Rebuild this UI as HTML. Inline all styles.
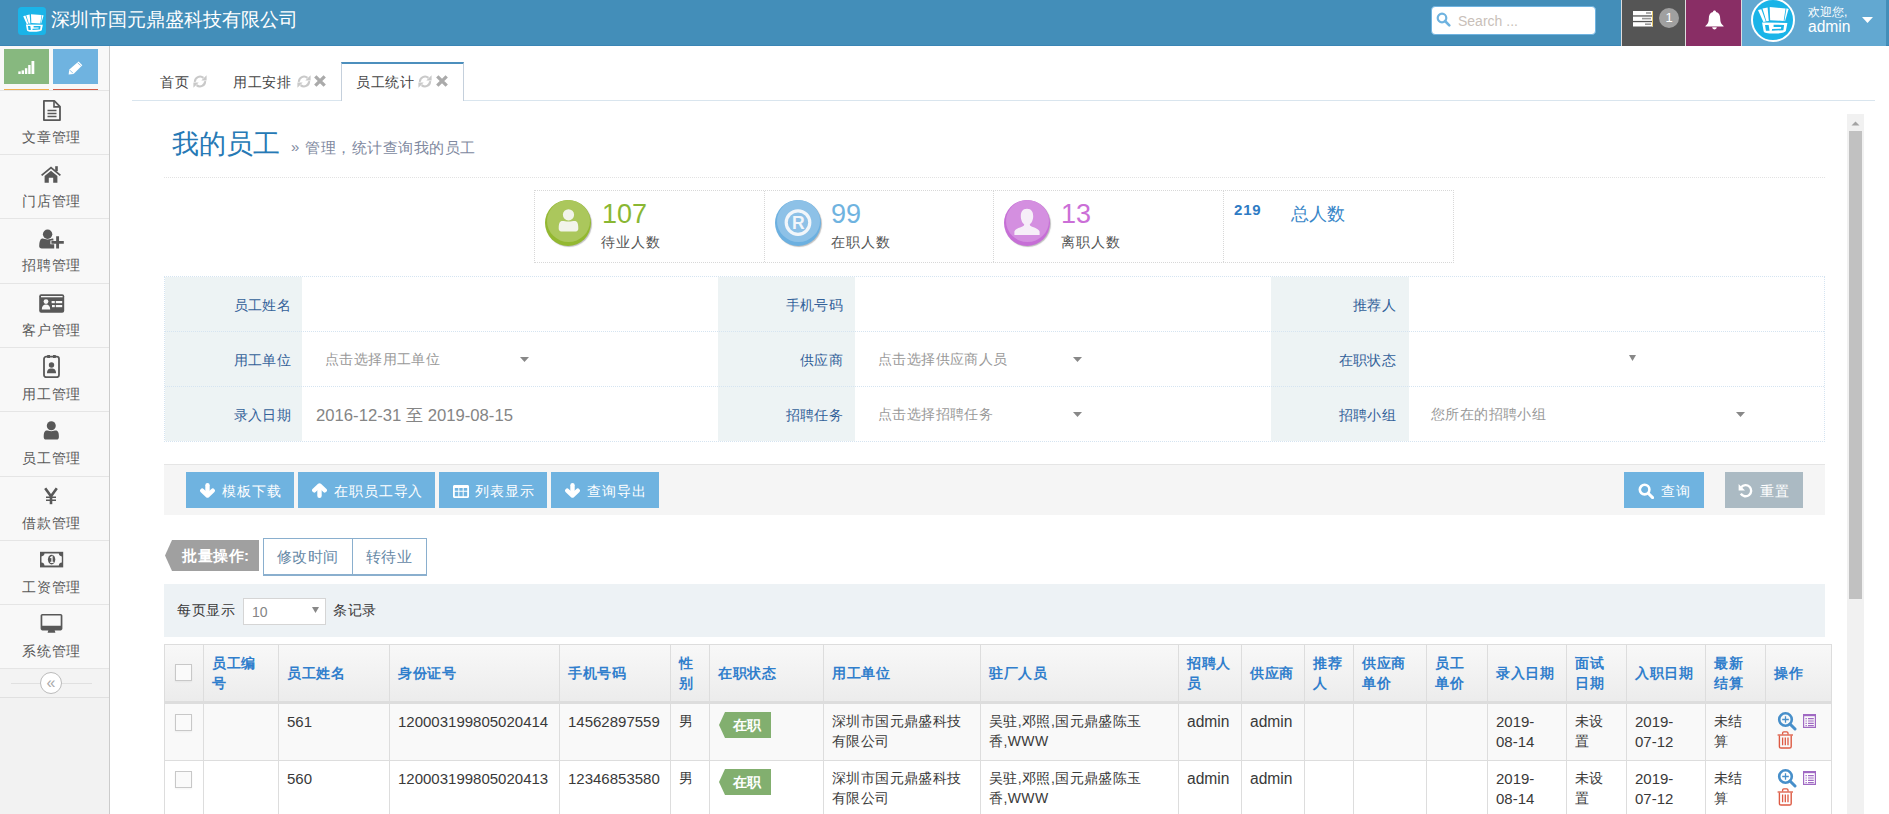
<!DOCTYPE html>
<html><head><meta charset="utf-8">
<style>
*{box-sizing:border-box;}
html,body{margin:0;padding:0;}
body{width:1889px;height:814px;overflow:hidden;position:relative;background:#fff;font-family:"Liberation Sans",sans-serif;font-size:14px;color:#393939;}
.abs{position:absolute;}
/* navbar */
#nav{left:0;top:0;width:1889px;height:46px;background:#438eb9;border-bottom:1px solid #3a85b5;}
#brand{left:51px;top:7px;color:#fff;font-size:18.6px;line-height:26px;white-space:nowrap;}
#search{left:1431px;top:6px;width:165px;height:29px;background:#fff;border:1px solid #6fb3e0;border-radius:4px;}
#search .ph{position:absolute;left:26px;top:6px;font-size:14px;line-height:16px;color:#c9bfb9;}
#tasks{left:1621px;top:0;width:64px;height:46px;background:#555;border-left:1px solid #ddd;}
#bell{left:1685px;top:0;width:56px;height:46px;background:#892e65;border-left:1px solid #ddd;}
#user{left:1741px;top:0;width:145px;height:46px;background:#62a8d1;border-left:1px solid #ddd;}
/* sidebar */
#side{left:0;top:46px;width:110px;height:768px;background:#f2f2f2;border-right:1px solid #ccc;}
.sc{position:absolute;top:3px;width:45px;height:35px;}
.item{position:absolute;left:0;width:109px;background:#f8f8f8;border-bottom:1px solid #e5e5e5;color:#585858;}
.item .t{position:absolute;left:22px;top:38px;font-size:14px;letter-spacing:0.8px;line-height:16px;white-space:nowrap;}
.item svg{position:absolute;}
.tab{font-size:14px;letter-spacing:0.7px;line-height:16px;color:#444;white-space:nowrap;}
.flab{font-size:14px;letter-spacing:0.3px;line-height:16px;color:#336199;text-align:right;white-space:nowrap;}
.fval{font-size:14px;letter-spacing:0.4px;line-height:16px;color:#999;white-space:nowrap;}
.circ{width:46px;height:46px;border-radius:50%;box-shadow:1px 1px 1px rgba(0,0,0,.25);overflow:hidden;}
.btxt{font-size:14px;letter-spacing:0.9px;line-height:16px;color:#fff;white-space:nowrap;}
.th{font-size:14px;letter-spacing:0.5px;line-height:20px;color:#307ecc;font-weight:bold;white-space:nowrap;}
.td{font-size:14px;letter-spacing:0.4px;line-height:20px;color:#393939;white-space:nowrap;}
.tdl{font-size:15px;line-height:20px;padding-top:1px;color:#393939;white-space:nowrap;}
.cb{width:17px;height:17px;border:1px solid #c8c8c8;background:#fafafa;box-shadow:0 1px 2px rgba(0,0,0,.05);}
</style></head>
<body>
<div id="nav" class="abs">
  <svg class="abs" style="left:18px;top:7px" width="28" height="28" viewBox="0 0 28 28">
    <rect x="0" y="0" width="28" height="28" rx="3.5" fill="#1ab4e8"/>
    <g id="lg" fill="#fff">
      <path d="M5.2 9.2 L7.4 8.6 L10.4 16.8 L8.8 17.2 Z"/>
      <path d="M8.2 8.2 L11.6 7.4 L12.4 16.4 L10.8 16.6 Z"/>
      <path d="M13 7.2 L23.6 8.1 L22.3 16.4 L13.3 15.9 Z"/>
      <path d="M24.2 8 L25.6 8.4 L23.2 16.6 L22.8 16.5 Z"/>
      <path d="M7.9 17.4 L24.8 17.8 L23.8 23 C23.2 24.2 20.8 24.8 14.5 24.8 C10.2 24.8 9.1 24.2 8.9 23 Z"/>
    </g>
    <g fill="#1ab4e8">
      <path d="M9.9 19.1 L12.3 19.1 L12.9 22.9 L10.5 22.9 Z"/>
      <path d="M15.6 18.9 L22.6 19.1 L22.1 22.6 L14.4 23 L14.6 21.8 L20.5 21.6 L20.7 20.4 L15.6 20.4 Z"/>
    </g>
  </svg>
  <div id="brand" class="abs">深圳市国元鼎盛科技有限公司</div>
  <div id="search" class="abs">
    <svg class="abs" style="left:4px;top:5px" width="15" height="15" viewBox="0 0 15 15"><circle cx="6" cy="6" r="4.3" fill="none" stroke="#6fb3e0" stroke-width="2.2"/><path d="M9 9 L13.3 13.3" stroke="#6fb3e0" stroke-width="2.6" stroke-linecap="round"/></svg>
    <div class="ph">Search ...</div>
  </div>
  <div id="tasks" class="abs">
    <svg class="abs" style="left:11px;top:11px" width="20" height="16" viewBox="0 0 20 16">
      <rect x="0" y="0" width="20" height="4.3" fill="#fff"/><rect x="0" y="5.6" width="20" height="4.3" fill="#fff"/><rect x="0" y="11.2" width="20" height="4.3" fill="#fff"/>
      <rect x="13" y="1.2" width="5" height="1.6" fill="#999"/><rect x="9" y="6.8" width="9" height="1.6" fill="#999"/><rect x="12" y="12.4" width="6" height="1.6" fill="#999"/>
      <rect x="19" y="0" width="1" height="15.5" fill="#e8c86a"/>
    </svg>
    <div class="abs" style="left:37px;top:8px;width:20px;height:20px;border-radius:10px;background:#a0a0a0;color:#fff;font-size:13px;line-height:20px;text-align:center;">1</div>
  </div>
  <div id="bell" class="abs">
    <svg class="abs" style="left:19px;top:10px" width="19" height="20" viewBox="0 0 19 20">
      <path d="M9.5 0.6 C10.4 0.6 11 1.2 11 2 C14 2.7 15.2 5 15.2 8.6 C15.2 12.6 16.2 14.2 18.6 16 L18.6 16.4 L0.4 16.4 L0.4 16 C2.8 14.2 3.8 12.6 3.8 8.6 C3.8 5 5 2.7 8 2 C8 1.2 8.6 0.6 9.5 0.6 Z" fill="#fff"/>
      <path d="M7.2 17.2 C7.4 18.6 8.3 19.4 9.5 19.4 C10.7 19.4 11.6 18.6 11.8 17.2 Z" fill="#fff"/>
    </svg>
  </div>
  <div id="user" class="abs">
    <svg class="abs" style="left:9px;top:-2px" width="44" height="44" viewBox="0 0 44 44">
      <circle cx="22" cy="22" r="21" fill="#1ab4e8" stroke="#fff" stroke-width="2"/>
      <g transform="translate(22 22) scale(1.5) translate(-15.2 -15.8)">
      <g fill="#fff">
      <path d="M5.2 9.2 L7.4 8.6 L10.4 16.8 L8.8 17.2 Z"/>
      <path d="M8.2 8.2 L11.6 7.4 L12.4 16.4 L10.8 16.6 Z"/>
      <path d="M13 7.2 L23.6 8.1 L22.3 16.4 L13.3 15.9 Z"/>
      <path d="M24.2 8 L25.6 8.4 L23.2 16.6 L22.8 16.5 Z"/>
      <path d="M7.9 17.4 L24.8 17.8 L23.8 23 C23.2 24.2 20.8 24.8 14.5 24.8 C10.2 24.8 9.1 24.2 8.9 23 Z"/>
      </g>
      <g fill="#1ab4e8">
      <path d="M9.9 19.1 L12.3 19.1 L12.9 22.9 L10.5 22.9 Z"/>
      <path d="M15.6 18.9 L22.6 19.1 L22.1 22.6 L14.4 23 L14.6 21.8 L20.5 21.6 L20.7 20.4 L15.6 20.4 Z"/>
      </g></g>
    </svg>
    <div class="abs" style="left:66px;top:5px;color:#fff;font-size:12px;line-height:14px;white-space:nowrap;">欢迎您,</div>
    <div class="abs" style="left:66px;top:18px;color:#fff;font-size:16px;line-height:18px;white-space:nowrap;"><span style="font-size:15.6px">admin</span></div>
    <svg class="abs" style="left:120px;top:17px" width="11" height="6" viewBox="0 0 11 6"><path d="M0 0 L11 0 L5.5 6 Z" fill="#fff"/></svg>
  </div>
</div>

<div id="side" class="abs">
  <div class="abs" style="left:0;top:0;width:109px;height:45px;background:#f8f8f8;border-bottom:1px solid #e5e5e5"></div>
  <div class="sc" style="left:4px;background:#87b87f"></div>
  <div class="sc" style="left:53px;background:#6fb3e0"></div>
  <div class="abs" style="left:4px;top:43px;width:45px;height:1px;background:#f0ad4e"></div>
  <div class="abs" style="left:53px;top:43px;width:45px;height:1px;background:#d15b47"></div>
  <svg class="abs" style="left:18px;top:14px" width="17" height="14" viewBox="0 0 17 14"><rect x="0.3" y="11.4" width="2.4" height="2.6" fill="#fff"/><rect x="3.6" y="10.4" width="2.4" height="3.6" fill="#fff"/><rect x="6.9" y="8.2" width="2.4" height="5.8" fill="#fff"/><rect x="10.2" y="5" width="2.4" height="9" fill="#fff"/><rect x="13.5" y="1" width="2.8" height="13" fill="#fff"/></svg>
  <svg class="abs" style="left:68px;top:15px" width="15" height="14" viewBox="0 0 15 14"><path d="M10.6 0.5 L14.3 4.2 L5.6 12.9 L0.6 13.6 L1.3 8.6 Z" fill="#fff"/><path d="M1.9 9.2 L5 12.3 M9.5 1.6 L12.6 4.7" stroke="#6fb3e0" stroke-width="0.8"/></svg>
<div class="item" style="top:45px;height:64px"><svg style="left:42px;top:8px" width="20" height="23" viewBox="0 0 20 23"><path d="M1.9 1.9 H12.3 L18 7.6 V21.1 H1.9 Z" fill="none" stroke="#585858" stroke-width="1.8" stroke-linejoin="round"/><path d="M12 2 V7.9 H18" fill="none" stroke="#585858" stroke-width="1.6"/><path d="M5.5 11.5 H14.5 M5.5 14.5 H14.5 M5.5 17.5 H14.5" stroke="#585858" stroke-width="1.4"/></svg><div class="t">文章管理</div></div>
<div class="item" style="top:109px;height:64px"><svg style="left:41px;top:11px" width="20" height="17" viewBox="0 0 20 17"><path d="M0.6 9.4 L10 1.6 L19.4 9.4" fill="none" stroke="#585858" stroke-width="1.8" stroke-linejoin="miter"/><rect x="14.2" y="0.2" width="2.6" height="5" fill="#585858"/><path d="M3.6 10 L10 4.8 L16.4 10 V16.7 H12.2 V11.8 H7.8 V16.7 H3.6 Z" fill="#585858"/></svg><div class="t">门店管理</div></div>
<div class="item" style="top:173px;height:65px"><svg style="left:39px;top:10px" width="26" height="20" viewBox="0 0 26 20"><circle cx="8.6" cy="5.2" r="4.7" fill="#585858"/><path d="M3 9.6 C4.6 9.1 6.2 10.4 8.6 10.4 C11 10.4 12.4 9.2 14.2 9.6 L14.6 11.6 H11.4 V15.2 H15.2 V19.4 H2.8 C1.1 19.4 0.1 18.5 0.2 16.8 C0.4 13 1 10.2 3 9.6 Z" fill="#585858"/><path d="M18.6 7.2 V19.4 M12.4 13.4 H24.8" stroke="#585858" stroke-width="2.9"/></svg><div class="t">招聘管理</div></div>
<div class="item" style="top:238px;height:64px"><svg style="left:39px;top:10px" width="26" height="19" viewBox="0 0 26 19"><rect x="0.2" y="0.2" width="25" height="18.6" rx="2" fill="#585858"/><rect x="2" y="2" width="21.6" height="1.3" fill="#f8f8f8"/><circle cx="7" cy="7.6" r="2.4" fill="#f8f8f8"/><path d="M2.8 15.6 C2.8 12.2 4.4 10.6 7 10.6 C9.6 10.6 11.2 12.2 11.2 15.6 Z" fill="#f8f8f8"/><rect x="12.6" y="7" width="10.6" height="2.2" fill="#f8f8f8"/><rect x="13" y="11" width="10.2" height="2.2" fill="#f8f8f8"/><rect x="15.8" y="6" width="1" height="8" fill="#585858"/></svg><div class="t">客户管理</div></div>
<div class="item" style="top:302px;height:64px"><svg style="left:43px;top:7px" width="17" height="23" viewBox="0 0 17 23"><rect x="1" y="1.6" width="15" height="20.6" rx="2.3" fill="none" stroke="#585858" stroke-width="1.8"/><path d="M4.2 0 H7 V3 H4.2 Z M10 0 H12.8 V3 H10 Z" fill="#585858"/><circle cx="8.5" cy="10" r="2.7" fill="#585858"/><path d="M4 18.2 C4 14.6 5.6 13.4 8.5 13.4 C11.4 13.4 13 14.6 13 18.2 Z" fill="#585858"/></svg><div class="t">用工管理</div></div>
<div class="item" style="top:366px;height:65px"><svg style="left:43px;top:9px" width="17" height="19" viewBox="0 0 17 19"><circle cx="8.3" cy="4.7" r="4.5" fill="#585858"/><path d="M2.6 9.8 C4.2 9.2 5.8 10.3 8.3 10.3 C10.8 10.3 12.4 9.2 14 9.8 C15.6 10.6 15.9 13 15.9 16 C15.9 17.6 15 18.6 13.6 18.6 H3 C1.6 18.6 0.7 17.6 0.7 16 C0.7 13 1 10.6 2.6 9.8 Z" fill="#585858"/></svg><div class="t">员工管理</div></div>
<div class="item" style="top:431px;height:64px"><svg style="left:44px;top:10px" width="14" height="18" viewBox="0 0 14 18"><path d="M1.2 1.2 L7 9.2 L12.8 1.2" fill="none" stroke="#585858" stroke-width="2.6"/><path d="M7 8.5 V17.2" stroke="#585858" stroke-width="2.6"/><path d="M2 10.2 H12 M2 13.2 H12" stroke="#585858" stroke-width="1.6"/></svg><div class="t">借款管理</div></div>
<div class="item" style="top:495px;height:64px"><svg style="left:40px;top:10px" width="24" height="17" viewBox="0 0 24 17"><rect x="0" y="0.8" width="23.2" height="15.6" fill="#585858"/><path d="M4.5 2.6 H18.8 C19 4.4 20.1 5.3 21.8 5.4 V11.6 C20.1 11.7 19 12.6 18.8 14.6 H4.5 C4.3 12.6 3.2 11.7 1.5 11.6 V5.4 C3.2 5.3 4.3 4.4 4.5 2.6 Z" fill="#f8f8f8"/><ellipse cx="11.6" cy="8.6" rx="3.7" ry="4.8" fill="#585858"/><path d="M10.2 6.8 L12 5.6 V11.2 M10.2 11.4 H13.6" fill="none" stroke="#f8f8f8" stroke-width="1.3"/></svg><div class="t">工资管理</div></div>
<div class="item" style="top:559px;height:64px"><svg style="left:40px;top:8px" width="24" height="21" viewBox="0 0 24 21"><path d="M2.4 0.9 H20.6 C21.6 0.9 22.4 1.7 22.4 2.7 V15.6 C22.4 16.6 21.6 17.4 20.6 17.4 H2.4 C1.4 17.4 0.6 16.6 0.6 15.6 V2.7 C0.6 1.7 1.4 0.9 2.4 0.9 Z M2.3 2.6 V12.8 H20.7 V2.6 Z" fill="#585858" fill-rule="evenodd"/><path d="M8.4 17 H14.6 L15.4 19.8 H7.6 Z" fill="#585858"/></svg><div class="t">系统管理</div></div>
  <div class="abs" style="left:0;top:623px;width:109px;height:29px;background:#f3f3f3;border-bottom:1px solid #e0e0e0"></div>
  <div class="abs" style="left:11px;top:637px;width:81px;height:1px;background:#e0e0e0"></div>
  <div class="abs" style="left:40px;top:626px;width:22px;height:22px;border-radius:11px;background:#fff;border:1px solid #bbb;color:#aaa;font-size:16px;line-height:19px;text-align:center;">&laquo;</div>
</div>


<!-- tabs -->
<div class="abs" style="left:132px;top:100px;width:1743px;height:1px;background:#d9e5ee"></div>
<div class="abs tab" style="left:160px;top:74px">首页</div>
<svg class="abs" style="left:193px;top:75px" width="14" height="13" viewBox="0 0 14 13"><path d="M1.9 6.9 A5.1 5.1 0 0 1 10.4 2.9 M12.1 6.1 A5.1 5.1 0 0 1 3.6 10.1" fill="none" stroke="#c9c9c9" stroke-width="2.1"/><path d="M13.6 0.3 V5.6 H8.3 Z M0.4 12.7 V7.4 H5.7 Z" fill="#c9c9c9"/></svg>
<div class="abs tab" style="left:233px;top:74px">用工安排</div>
<svg class="abs" style="left:297px;top:75px" width="14" height="13" viewBox="0 0 14 13"><path d="M1.9 6.9 A5.1 5.1 0 0 1 10.4 2.9 M12.1 6.1 A5.1 5.1 0 0 1 3.6 10.1" fill="none" stroke="#c9c9c9" stroke-width="2.1"/><path d="M13.6 0.3 V5.6 H8.3 Z M0.4 12.7 V7.4 H5.7 Z" fill="#c9c9c9"/></svg>
<svg class="abs" style="left:314px;top:75px" width="12" height="12" viewBox="0 0 12 12"><path d="M1.3 1.3 L10.7 10.7 M10.7 1.3 L1.3 10.7" stroke="#aaa" stroke-width="3.3"/></svg>
<div class="abs" style="left:341px;top:62px;width:123px;height:39px;background:#fff;border:1px solid #c5d0dc;border-top:2px solid #4c8fbd;border-bottom:none"></div>
<div class="abs tab" style="left:356px;top:74px">员工统计</div>
<svg class="abs" style="left:418px;top:75px" width="14" height="13" viewBox="0 0 14 13"><path d="M1.9 6.9 A5.1 5.1 0 0 1 10.4 2.9 M12.1 6.1 A5.1 5.1 0 0 1 3.6 10.1" fill="none" stroke="#c9c9c9" stroke-width="2.1"/><path d="M13.6 0.3 V5.6 H8.3 Z M0.4 12.7 V7.4 H5.7 Z" fill="#c9c9c9"/></svg>
<svg class="abs" style="left:436px;top:75px" width="12" height="12" viewBox="0 0 12 12"><path d="M1.3 1.3 L10.7 10.7 M10.7 1.3 L1.3 10.7" stroke="#aaa" stroke-width="3.3"/></svg>

<!-- scrollbar -->
<div class="abs" style="left:1847px;top:114px;width:17px;height:700px;background:#f1f1f1"></div>
<svg class="abs" style="left:1850px;top:120px" width="11" height="6" viewBox="0 0 11 6"><path d="M1.5 5.5 L5.5 1.5 L9.5 5.5 Z" fill="#a3a3a3"/></svg>
<div class="abs" style="left:1849px;top:131px;width:13px;height:468px;background:#c1c1c1"></div>

<!-- title -->
<div class="abs" style="left:172px;top:128px;font-size:26.5px;line-height:32px;color:#2679b5;white-space:nowrap">我的员工</div>
<div class="abs" style="left:291px;top:138px;font-size:15px;line-height:18px;color:#8089a0;white-space:nowrap">»</div><div class="abs" style="left:305px;top:139px;font-size:15px;letter-spacing:0.5px;line-height:18px;color:#8089a0;white-space:nowrap">管理，统计查询我的员工</div>
<div class="abs" style="left:164px;top:177px;width:1661px;height:0;border-top:1px dotted #e2e2e2"></div>

<!-- stats -->
<div class="abs" style="left:534px;top:190px;width:920px;height:73px;border:1px dotted #d8d8d8"></div>
<div class="abs" style="left:764px;top:191px;width:0;height:71px;border-left:1px dotted #d8d8d8"></div>
<div class="abs" style="left:993px;top:191px;width:0;height:71px;border-left:1px dotted #d8d8d8"></div>
<div class="abs" style="left:1223px;top:191px;width:0;height:71px;border-left:1px dotted #d8d8d8"></div>
<div class="abs circ" style="left:545px;top:200px;background:#93b831"><div class="abs" style="left:2px;top:0;width:43px;height:42px;border-radius:50%;background:#abc75c"></div><svg class="abs" style="left:13px;top:9px" width="21" height="23" viewBox="0 0 21 23"><circle cx="10.5" cy="5.8" r="5.6" fill="#f2f4ea"/><path d="M3 12.2 C5 11.4 7 12.6 10.5 12.6 C14 12.6 16 11.4 18 12.2 C20 13 20.3 16 20.3 19.5 C20.3 21.2 19.4 22.4 17.8 22.4 H3.2 C1.6 22.4 0.7 21.2 0.7 19.5 C0.7 16 1 13 3 12.2 Z" fill="#f2f4ea"/></svg></div><div class="abs" style="left:602px;top:198px;font-size:27px;line-height:32px;color:#8ab733;white-space:nowrap">107</div><div class="abs" style="left:601px;top:234px;font-size:14px;letter-spacing:1px;line-height:16px;color:#555;white-space:nowrap">待业人数</div><div class="abs circ" style="left:775px;top:200px;background:#6cb0e0"><div class="abs" style="left:2px;top:0;width:43px;height:42px;border-radius:50%;background:#8dc1e7"></div><svg class="abs" style="left:9px;top:9px" width="28" height="28" viewBox="0 0 28 28"><circle cx="14" cy="13.6" r="11.8" fill="none" stroke="#f2f6fa" stroke-width="3.2"/><text x="14.2" y="19.6" text-anchor="middle" font-family="Liberation Sans" font-weight="bold" font-size="17.5" fill="#f2f6fa">R</text></svg></div><div class="abs" style="left:831px;top:198px;font-size:27px;line-height:32px;color:#6fb3e0;white-space:nowrap">99</div><div class="abs" style="left:831px;top:234px;font-size:14px;letter-spacing:1px;line-height:16px;color:#555;white-space:nowrap">在职人数</div><div class="abs circ" style="left:1004px;top:200px;background:#c66fd6"><div class="abs" style="left:2px;top:0;width:43px;height:42px;border-radius:50%;background:#d48fe0"></div><svg class="abs" style="left:9px;top:8px" width="28" height="28" viewBox="0 0 28 28"><path d="M14 0.8 C18.6 0.8 20.2 4.2 20.2 8.2 C20.2 12.2 18.3 15.3 16.8 16.2 C16.8 17.3 17.4 18 19.2 18.7 C23.2 20.2 26.2 21.6 26.6 23.6 V27 H1.4 V23.6 C1.8 21.6 4.8 20.2 8.8 18.7 C10.6 18 11.2 17.3 11.2 16.2 C9.7 15.3 7.8 12.2 7.8 8.2 C7.8 4.2 9.4 0.8 14 0.8 Z" fill="#f6eef8"/></svg></div><div class="abs" style="left:1061px;top:198px;font-size:27px;line-height:32px;color:#cb6fd7;white-space:nowrap">13</div><div class="abs" style="left:1061px;top:234px;font-size:14px;letter-spacing:1px;line-height:16px;color:#555;white-space:nowrap">离职人数</div><div class="abs" style="left:1234px;top:200px;font-size:15px;letter-spacing:0.8px;font-weight:bold;line-height:20px;color:#2e7bc4;white-space:nowrap">219</div><div class="abs" style="left:1291px;top:203px;font-size:18px;line-height:22px;color:#3a87c8;white-space:nowrap">总人数</div>

<!-- form -->
<div class="abs" style="left:164px;top:276px;width:1661px;height:166px;border:1px dotted #d5e4f1;"></div>
<div class="abs" style="left:165px;top:277px;width:137px;height:164px;background:#edf3f4"></div>
<div class="abs" style="left:718px;top:277px;width:137px;height:164px;background:#edf3f4"></div>
<div class="abs" style="left:1271px;top:277px;width:138px;height:164px;background:#edf3f4"></div>
<div class="abs" style="left:165px;top:331px;width:1659px;height:0;border-top:1px dotted #d5e4f1"></div>
<div class="abs" style="left:165px;top:386px;width:1659px;height:0;border-top:1px dotted #d5e4f1"></div>
<div class="abs flab" style="left:164px;top:297px;width:127px">员工姓名</div>
<div class="abs flab" style="left:718px;top:297px;width:125px">手机号码</div>
<div class="abs flab" style="left:1271px;top:297px;width:125px">推荐人</div>
<div class="abs flab" style="left:164px;top:352px;width:127px">用工单位</div>
<div class="abs flab" style="left:718px;top:352px;width:125px">供应商</div>
<div class="abs flab" style="left:1271px;top:352px;width:125px">在职状态</div>
<div class="abs flab" style="left:164px;top:407px;width:127px">录入日期</div>
<div class="abs flab" style="left:718px;top:407px;width:125px">招聘任务</div>
<div class="abs flab" style="left:1271px;top:407px;width:125px">招聘小组</div>
<div class="abs fval" style="left:325px;top:351px">点击选择用工单位</div>
<div class="abs fval" style="left:878px;top:351px">点击选择供应商人员</div>
<div class="abs fval" style="left:878px;top:406px">点击选择招聘任务</div>
<div class="abs fval" style="left:1431px;top:406px">您所在的招聘小组</div>
<div class="abs" style="left:316px;top:407px;font-size:16.7px;line-height:18px;color:#858585;white-space:nowrap">2016-12-31 至 2019-08-15</div>
<svg class="abs" style="left:520px;top:357px" width="9" height="5" viewBox="0 0 9 5"><path d="M0 0 H9 L4.5 5 Z" fill="#888"/></svg>
<svg class="abs" style="left:1073px;top:357px" width="9" height="5" viewBox="0 0 9 5"><path d="M0 0 H9 L4.5 5 Z" fill="#888"/></svg>
<svg class="abs" style="left:1073px;top:412px" width="9" height="5" viewBox="0 0 9 5"><path d="M0 0 H9 L4.5 5 Z" fill="#888"/></svg>
<svg class="abs" style="left:1736px;top:412px" width="9" height="5" viewBox="0 0 9 5"><path d="M0 0 H9 L4.5 5 Z" fill="#888"/></svg>
<svg class="abs" style="left:1629px;top:355px" width="7" height="6" viewBox="0 0 7 6"><path d="M0 0 H7 L3.5 6 Z" fill="#888"/></svg>

<!-- toolbar -->
<div class="abs" style="left:164px;top:464px;width:1661px;height:51px;background:#f5f5f5;border-top:1px solid #e5e5e5"></div>
<div class="abs" style="left:186px;top:472px;width:108px;height:36px;background:#6fb3e0"></div>
<svg class="abs" style="left:200px;top:483px" width="15" height="15" viewBox="0 0 15 15"><path d="M7.5 2.2 V11" stroke="#fff" stroke-width="4.4" stroke-linecap="round" fill="none"/><path d="M2.2 7.6 L7.5 12.6 L12.8 7.6" stroke="#fff" stroke-width="4.2" stroke-linecap="round" stroke-linejoin="round" fill="none"/></svg>
<div class="abs btxt" style="left:222px;top:483px">模板下载</div>
<div class="abs" style="left:298px;top:472px;width:137px;height:36px;background:#6fb3e0"></div>
<svg class="abs" style="left:312px;top:483px" width="15" height="15" viewBox="0 0 15 15"><path d="M7.5 12.8 V4" stroke="#fff" stroke-width="4.4" stroke-linecap="round" fill="none"/><path d="M2.2 7.4 L7.5 2.4 L12.8 7.4" stroke="#fff" stroke-width="4.2" stroke-linecap="round" stroke-linejoin="round" fill="none"/></svg>
<div class="abs btxt" style="left:334px;top:483px">在职员工导入</div>
<div class="abs" style="left:439px;top:472px;width:108px;height:36px;background:#6fb3e0"></div>
<svg class="abs" style="left:453px;top:485px" width="16" height="13" viewBox="0 0 16 13"><path d="M1.5 0 H14.5 C15.3 0 16 0.7 16 1.5 V11.5 C16 12.3 15.3 13 14.5 13 H1.5 C0.7 13 0 12.3 0 11.5 V1.5 C0 0.7 0.7 0 1.5 0 Z M1.8 3 V5.8 H5.3 V3 Z M6.3 3 V5.8 H9.7 V3 Z M10.7 3 V5.8 H14.2 V3 Z M1.8 6.8 V11.2 H5.3 V6.8 Z M6.3 6.8 V11.2 H9.7 V6.8 Z M10.7 6.8 V11.2 H14.2 V6.8 Z" fill="#fff" fill-rule="evenodd"/></svg>
<div class="abs btxt" style="left:475px;top:483px">列表显示</div>
<div class="abs" style="left:551px;top:472px;width:108px;height:36px;background:#6fb3e0"></div>
<svg class="abs" style="left:565px;top:483px" width="15" height="15" viewBox="0 0 15 15"><path d="M7.5 2.2 V11" stroke="#fff" stroke-width="4.4" stroke-linecap="round" fill="none"/><path d="M2.2 7.6 L7.5 12.6 L12.8 7.6" stroke="#fff" stroke-width="4.2" stroke-linecap="round" stroke-linejoin="round" fill="none"/></svg>
<div class="abs btxt" style="left:587px;top:483px">查询导出</div>
<div class="abs" style="left:1624px;top:472px;width:80px;height:36px;background:#6fb3e0"></div>
<svg class="abs" style="left:1638px;top:483px" width="16" height="16" viewBox="0 0 16 16"><circle cx="6.6" cy="6.6" r="4.8" fill="none" stroke="#fff" stroke-width="2.6"/><path d="M10.2 10.2 L14.6 14.6" stroke="#fff" stroke-width="3" stroke-linecap="round"/></svg>
<div class="abs btxt" style="left:1661px;top:483px">查询</div>
<div class="abs" style="left:1725px;top:472px;width:78px;height:36px;background:#abbac3"></div>
<svg class="abs" style="left:1738px;top:483px" width="15" height="15" viewBox="0 0 15 15"><path d="M3.2 4.2 A5.6 5.6 0 1 1 2.8 10.6" fill="none" stroke="#fff" stroke-width="2.4"/><path d="M0.6 1 V7.4 H7 Z" fill="#fff"/></svg>
<div class="abs btxt" style="left:1760px;top:483px">重置</div>

<!-- batch -->
<svg class="abs" style="left:165px;top:540px" width="94" height="31" viewBox="0 0 94 31"><path d="M7 0 H94 V31 H7 L0 15.5 Z" fill="#a0a0a0"/></svg>
<div class="abs" style="left:182px;top:548px;font-size:15px;letter-spacing:0.5px;line-height:16px;font-weight:bold;color:#fff;white-space:nowrap">批量操作:</div>
<div class="abs" style="left:263px;top:538px;width:164px;height:38px;border:1px solid #8aafce;border-bottom-width:2px;background:#fff"></div>
<div class="abs" style="left:352px;top:539px;width:1px;height:35px;background:#8aafce"></div>
<div class="abs" style="left:277px;top:548px;font-size:15px;letter-spacing:0.4px;line-height:17px;color:#6688a6;white-space:nowrap">修改时间</div>
<div class="abs" style="left:366px;top:548px;font-size:15px;letter-spacing:0.4px;line-height:17px;color:#6688a6;white-space:nowrap">转待业</div>

<!-- length -->
<div class="abs" style="left:164px;top:584px;width:1661px;height:53px;background:#edf2f5"></div>
<div class="abs" style="left:177px;top:602px;font-size:14px;letter-spacing:0.6px;line-height:16px;color:#393939;white-space:nowrap">每页显示</div>
<div class="abs" style="left:243px;top:598px;width:83px;height:27px;border:1px solid #d5d5d5;background:#fff"></div>
<div class="abs" style="left:252px;top:604px;font-size:14px;line-height:16px;color:#858585;white-space:nowrap">10</div>
<svg class="abs" style="left:312px;top:607px" width="7" height="6" viewBox="0 0 7 6"><path d="M0 0 H7 L3.5 6 Z" fill="#888"/></svg>
<div class="abs" style="left:333px;top:602px;font-size:14px;letter-spacing:0.6px;line-height:16px;color:#393939;white-space:nowrap">条记录</div>

<!-- table -->
<div class="abs" style="left:164px;top:644px;width:1668px;height:1px;background:#ddd"></div>
<div class="abs" style="left:165px;top:645px;width:1666px;height:56px;background:linear-gradient(#f8f8f8,#ececec)"></div>
<div class="abs" style="left:164px;top:701px;width:1668px;height:3px;background:#ddd"></div>
<div class="abs" style="left:165px;top:704px;width:1666px;height:56px;background:#f9f9f9"></div>
<div class="abs" style="left:164px;top:760px;width:1668px;height:1px;background:#ddd"></div>
<div class="abs" style="left:164px;top:644px;width:1px;height:170px;background:#ddd"></div>
<div class="abs" style="left:203px;top:644px;width:1px;height:170px;background:#ddd"></div>
<div class="abs" style="left:278px;top:644px;width:1px;height:170px;background:#ddd"></div>
<div class="abs" style="left:389px;top:644px;width:1px;height:170px;background:#ddd"></div>
<div class="abs" style="left:559px;top:644px;width:1px;height:170px;background:#ddd"></div>
<div class="abs" style="left:670px;top:644px;width:1px;height:170px;background:#ddd"></div>
<div class="abs" style="left:709px;top:644px;width:1px;height:170px;background:#ddd"></div>
<div class="abs" style="left:823px;top:644px;width:1px;height:170px;background:#ddd"></div>
<div class="abs" style="left:980px;top:644px;width:1px;height:170px;background:#ddd"></div>
<div class="abs" style="left:1178px;top:644px;width:1px;height:170px;background:#ddd"></div>
<div class="abs" style="left:1241px;top:644px;width:1px;height:170px;background:#ddd"></div>
<div class="abs" style="left:1304px;top:644px;width:1px;height:170px;background:#ddd"></div>
<div class="abs" style="left:1353px;top:644px;width:1px;height:170px;background:#ddd"></div>
<div class="abs" style="left:1426px;top:644px;width:1px;height:170px;background:#ddd"></div>
<div class="abs" style="left:1487px;top:644px;width:1px;height:170px;background:#ddd"></div>
<div class="abs" style="left:1566px;top:644px;width:1px;height:170px;background:#ddd"></div>
<div class="abs" style="left:1626px;top:644px;width:1px;height:170px;background:#ddd"></div>
<div class="abs" style="left:1705px;top:644px;width:1px;height:170px;background:#ddd"></div>
<div class="abs" style="left:1765px;top:644px;width:1px;height:170px;background:#ddd"></div>
<div class="abs" style="left:1831px;top:644px;width:1px;height:170px;background:#ddd"></div>
<div class="abs th" style="left:212px;top:653px">员工编<br>号</div>
<div class="abs th" style="left:287px;top:663px">员工姓名</div>
<div class="abs th" style="left:398px;top:663px">身份证号</div>
<div class="abs th" style="left:568px;top:663px">手机号码</div>
<div class="abs th" style="left:679px;top:653px">性<br>别</div>
<div class="abs th" style="left:718px;top:663px">在职状态</div>
<div class="abs th" style="left:832px;top:663px">用工单位</div>
<div class="abs th" style="left:989px;top:663px">驻厂人员</div>
<div class="abs th" style="left:1187px;top:653px">招聘人<br>员</div>
<div class="abs th" style="left:1250px;top:663px">供应商</div>
<div class="abs th" style="left:1313px;top:653px">推荐<br>人</div>
<div class="abs th" style="left:1362px;top:653px">供应商<br>单价</div>
<div class="abs th" style="left:1435px;top:653px">员工<br>单价</div>
<div class="abs th" style="left:1496px;top:663px">录入日期</div>
<div class="abs th" style="left:1575px;top:653px">面试<br>日期</div>
<div class="abs th" style="left:1635px;top:663px">入职日期</div>
<div class="abs th" style="left:1714px;top:653px">最新<br>结算</div>
<div class="abs th" style="left:1774px;top:663px">操作</div>
<div class="abs cb" style="left:175px;top:664px"></div>
<div class="abs cb" style="left:175px;top:714px"></div>
<div class="abs tdl" style="left:287px;top:711px">561</div>
<div class="abs tdl" style="left:398px;top:711px">120003199805020414</div>
<div class="abs tdl" style="left:568px;top:711px">14562897559</div>
<div class="abs td" style="left:679px;top:711px">男</div>
<svg class="abs" style="left:719px;top:712px" width="52" height="26" viewBox="0 0 52 26"><path d="M6 0 H52 V26 H6 L0 13 Z" fill="#82af6f"/></svg>
<div class="abs" style="left:733px;top:717px;font-size:14px;line-height:16px;color:#fff;font-weight:bold;white-space:nowrap">在职</div>
<div class="abs td" style="left:832px;top:711px">深圳市国元鼎盛科技<br>有限公司</div>
<div class="abs td" style="left:989px;top:711px">吴驻,邓照,国元鼎盛陈玉<br>香,WWW</div>
<div class="abs tdl" style="left:1187px;top:711px"><span style="font-size:15.6px">admin</span></div>
<div class="abs tdl" style="left:1250px;top:711px"><span style="font-size:15.6px">admin</span></div>
<div class="abs tdl" style="left:1496px;top:711px">2019-<br>08-14</div>
<div class="abs td" style="left:1575px;top:711px">未设<br>置</div>
<div class="abs tdl" style="left:1635px;top:711px">2019-<br>07-12</div>
<div class="abs td" style="left:1714px;top:711px">未结<br>算</div>
<svg class="abs" style="left:1777px;top:711px" width="20" height="20" viewBox="0 0 20 20"><circle cx="8.5" cy="8.5" r="6.3" fill="none" stroke="#478fca" stroke-width="2.6"/><path d="M13 13 L18 18" stroke="#478fca" stroke-width="3" stroke-linecap="round"/><path d="M8.5 5.2 V11.8 M5.2 8.5 H11.8" stroke="#478fca" stroke-width="1.3"/></svg>
<svg class="abs" style="left:1803px;top:714px" width="13" height="14" viewBox="0 0 13 14"><rect x="0.6" y="0.6" width="11.8" height="12.8" fill="none" stroke="#a069c3" stroke-width="1.2"/><rect x="0.6" y="0.6" width="11.8" height="1.6" fill="#a069c3"/><path d="M2.5 4.6 H3.8 M5 4.6 H10.8 M2.5 7 H3.8 M5 7 H10.8 M2.5 9.4 H3.8 M5 9.4 H10.8 M2.5 11.6 H3.8 M5 11.6 H10.8" stroke="#a069c3" stroke-width="1.1"/></svg>
<svg class="abs" style="left:1777px;top:731px" width="17" height="18" viewBox="0 0 17 18"><path d="M0.6 4 H16" stroke="#dd5a43" stroke-width="1.3"/><path d="M5.6 3.6 V2 C5.6 1.3 6.2 0.8 6.9 0.8 H9.7 C10.4 0.8 11 1.3 11 2 V3.6" fill="none" stroke="#dd5a43" stroke-width="1.3"/><path d="M2.4 4.4 V15.4 C2.4 16.4 3 17 4 17 H12.6 C13.6 17 14.2 16.4 14.2 15.4 V4.4" fill="none" stroke="#dd5a43" stroke-width="1.4"/><path d="M5.6 6.6 V14.2 M8.3 6.6 V14.2 M11 6.6 V14.2" stroke="#dd5a43" stroke-width="1.3"/></svg>
<div class="abs cb" style="left:175px;top:771px"></div>
<div class="abs tdl" style="left:287px;top:768px">560</div>
<div class="abs tdl" style="left:398px;top:768px">120003199805020413</div>
<div class="abs tdl" style="left:568px;top:768px">12346853580</div>
<div class="abs td" style="left:679px;top:768px">男</div>
<svg class="abs" style="left:719px;top:769px" width="52" height="26" viewBox="0 0 52 26"><path d="M6 0 H52 V26 H6 L0 13 Z" fill="#82af6f"/></svg>
<div class="abs" style="left:733px;top:774px;font-size:14px;line-height:16px;color:#fff;font-weight:bold;white-space:nowrap">在职</div>
<div class="abs td" style="left:832px;top:768px">深圳市国元鼎盛科技<br>有限公司</div>
<div class="abs td" style="left:989px;top:768px">吴驻,邓照,国元鼎盛陈玉<br>香,WWW</div>
<div class="abs tdl" style="left:1187px;top:768px"><span style="font-size:15.6px">admin</span></div>
<div class="abs tdl" style="left:1250px;top:768px"><span style="font-size:15.6px">admin</span></div>
<div class="abs tdl" style="left:1496px;top:768px">2019-<br>08-14</div>
<div class="abs td" style="left:1575px;top:768px">未设<br>置</div>
<div class="abs tdl" style="left:1635px;top:768px">2019-<br>07-12</div>
<div class="abs td" style="left:1714px;top:768px">未结<br>算</div>
<svg class="abs" style="left:1777px;top:768px" width="20" height="20" viewBox="0 0 20 20"><circle cx="8.5" cy="8.5" r="6.3" fill="none" stroke="#478fca" stroke-width="2.6"/><path d="M13 13 L18 18" stroke="#478fca" stroke-width="3" stroke-linecap="round"/><path d="M8.5 5.2 V11.8 M5.2 8.5 H11.8" stroke="#478fca" stroke-width="1.3"/></svg>
<svg class="abs" style="left:1803px;top:771px" width="13" height="14" viewBox="0 0 13 14"><rect x="0.6" y="0.6" width="11.8" height="12.8" fill="none" stroke="#a069c3" stroke-width="1.2"/><rect x="0.6" y="0.6" width="11.8" height="1.6" fill="#a069c3"/><path d="M2.5 4.6 H3.8 M5 4.6 H10.8 M2.5 7 H3.8 M5 7 H10.8 M2.5 9.4 H3.8 M5 9.4 H10.8 M2.5 11.6 H3.8 M5 11.6 H10.8" stroke="#a069c3" stroke-width="1.1"/></svg>
<svg class="abs" style="left:1777px;top:788px" width="17" height="18" viewBox="0 0 17 18"><path d="M0.6 4 H16" stroke="#dd5a43" stroke-width="1.3"/><path d="M5.6 3.6 V2 C5.6 1.3 6.2 0.8 6.9 0.8 H9.7 C10.4 0.8 11 1.3 11 2 V3.6" fill="none" stroke="#dd5a43" stroke-width="1.3"/><path d="M2.4 4.4 V15.4 C2.4 16.4 3 17 4 17 H12.6 C13.6 17 14.2 16.4 14.2 15.4 V4.4" fill="none" stroke="#dd5a43" stroke-width="1.4"/><path d="M5.6 6.6 V14.2 M8.3 6.6 V14.2 M11 6.6 V14.2" stroke="#dd5a43" stroke-width="1.3"/></svg>

</body></html>
